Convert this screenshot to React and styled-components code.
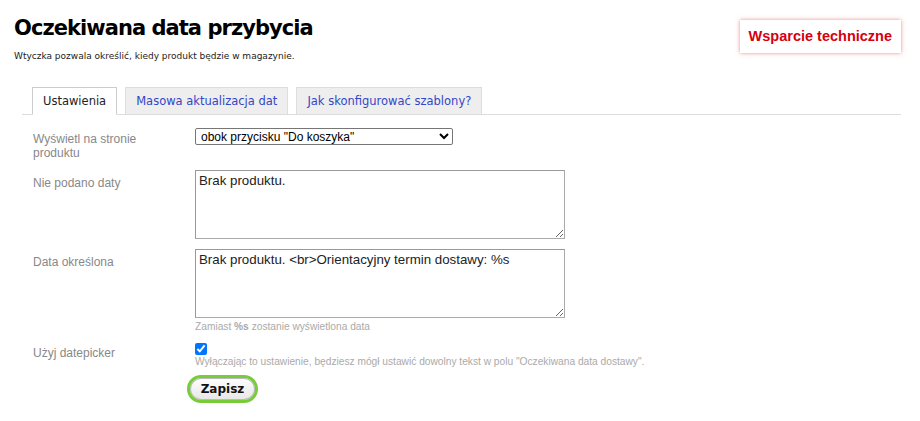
import React from "react";
import styled, { createGlobalStyle } from "styled-components";

const GlobalStyle = createGlobalStyle`
  body {
    margin: 0;
    background: #fff;
    font-family: "Liberation Sans", Arial, sans-serif;
  }
`

const Page = styled.div`
  width: 920px;
  padding: 15px 19px 0 14px;
  box-sizing: border-box;
`
const Header = styled.div`
  display: flex;
  justify-content: space-between;
  align-items: flex-start;
`
const Title = styled.h1`
  margin: 0;
  font-family: "DejaVu Sans", Verdana, sans-serif;
  font-size: 21px;
  letter-spacing: -0.95px;
  font-weight: bold;
  color: #000;
  line-height: 26px;
`
const Subtitle = styled.p`
  margin: 10px 0 0;
  font-family: "DejaVu Sans", Verdana, sans-serif;
  font-size: 9px;
  color: #222;
`
const SupportButton = styled.a`
  margin-top: 5px;
  padding: 8px 9px 9px;
  color: #d4000f;
  font-weight: bold;
  font-size: 14.5px;
  text-decoration: none;
  background: #fff;
  box-shadow: 0 0 4px rgba(230, 40, 40, 0.55);
`
const Tabs = styled.div`
  display: flex;
  gap: 8px;
  margin: 26px 0 0 8px;
  padding-left: 10px;
  border-bottom: 1px solid #ddd;
`
const Tab = styled.div`
  padding: 0 10px;
  height: 28px;
  line-height: 27px;
  font-family: "DejaVu Sans", Verdana, sans-serif;
  font-size: 11.5px;
  box-sizing: border-box;
  margin-bottom: -1px;
  border: 1px solid ${p => (p.$active ? "#ccc" : "#ddd")};
  border-bottom-color: ${p => (p.$active ? "#fff" : "#ddd")};
  background: ${p => (p.$active ? "#fff" : "#eee")};
  color: ${p => (p.$active ? "#222" : "#3346c8")};
`
const Form = styled.div`
  display: grid;
  grid-template-columns: 162px 1fr;
  margin: 12px 0 0 19px;
  row-gap: 10px;
`
const Label = styled.div`
  font-size: 12px;
  color: #888;
  line-height: 14px;
  padding-top: ${p => p.$top || 6}px;
  width: 110px;
`
const Field = styled.div`
  display: flex;
  flex-direction: column;
  align-items: flex-start;
`
const Select = styled.select`
  width: 258px;
  height: 17px;
  font-family: "Liberation Sans", Arial, sans-serif;
  font-size: 12px;
  padding: 0 0 0 1px;
  margin: 1px 0 0;
  border: 1px solid #767676;
  border-radius: 2px;
  background: #fff;
  color: #000;
`
const TextArea = styled.textarea`
  width: 370px;
  height: 69px;
  box-sizing: border-box;
  margin: 0;
  padding: 2px 3px;
  font-family: "Liberation Sans", Arial, sans-serif;
  font-size: 13.3px;
  border: 1px solid #aaa;
  border-top-color: #999;
  border-left-color: #999;
  color: #222;
`
const Hint = styled.div`
  font-size: 10.2px;
  color: #aaa;
  margin-top: ${p => p.$top || 4}px;
`
const Checkbox = styled.input`
  width: 12px;
  height: 12px;
  margin: 1px 0 0;
  accent-color: #0075ff;
`
const SaveButton = styled.button`
  margin: 8px 0 0 -8px;
  width: 71px;
  height: 28px;
  border: 3px solid #78cc3a;
  border-radius: 14px;
  background: linear-gradient(#fff, #e6e6e6);
  font-family: "DejaVu Sans", Verdana, sans-serif;
  font-weight: bold;
  font-size: 12px;
  color: #111;
  box-shadow: inset 0 0 0 1px #bbb;
`

export default function App() {
  return (
    <>
      <GlobalStyle />
      <Page>
        <Header>
          <div>
            <Title>Oczekiwana data przybycia</Title>
            <Subtitle>Wtyczka pozwala określić, kiedy produkt będzie w magazynie.</Subtitle>
          </div>
          <SupportButton href="#">Wsparcie techniczne</SupportButton>
        </Header>
        <Tabs>
          <Tab $active>Ustawienia</Tab>
          <Tab>Masowa aktualizacja dat</Tab>
          <Tab>Jak skonfigurować szablony?</Tab>
        </Tabs>
        <Form>
          <Label $top={5}>Wyświetl na stronie produktu</Label>
          <Field>
            <Select defaultValue="cart">
              <option value="cart">obok przycisku "Do koszyka"</option>
            </Select>
          </Field>
          <Label>Nie podano daty</Label>
          <Field>
            <TextArea defaultValue="Brak produktu." />
          </Field>
          <Label>Data określona</Label>
          <Field>
            <TextArea defaultValue="Brak produktu. <br>Orientacyjny termin dostawy: %s" />
            <Hint $top={3}>Zamiast <b>%s</b> zostanie wyświetlona data</Hint>
          </Field>
          <Label $top={4}>Użyj datepicker</Label>
          <Field>
            <Checkbox type="checkbox" defaultChecked />
            <Hint $top={1}>Wyłączając to ustawienie, będziesz mógł ustawić dowolny tekst w polu "Oczekiwana data dostawy".</Hint>
            <SaveButton>Zapisz</SaveButton>
          </Field>
        </Form>
      </Page>
    </>
  );
}
